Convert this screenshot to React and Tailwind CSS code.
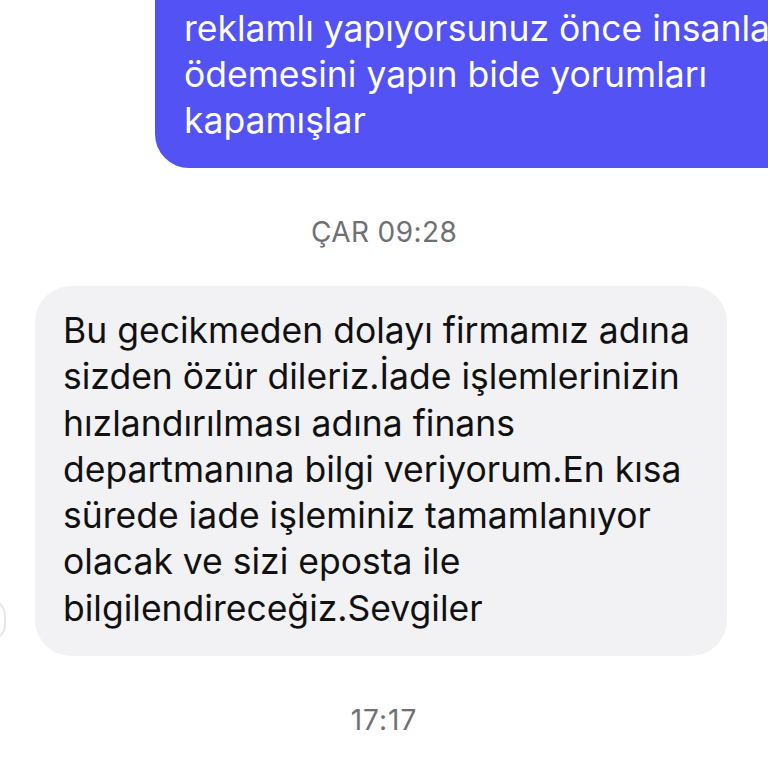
import React from "react";

export default function App() {
  const purple = [
    "reklamlı yapıyorsunuz önce insanların",
    "ödemesini yapın bide yorumları",
    "kapamışlar",
  ];
  const gray = [
    "Bu gecikmeden dolayı firmamız adına",
    "sizden özür dileriz.İade işlemlerinizin",
    "hızlandırılması adına finans",
    "departmanına bilgi veriyorum.En kısa",
    "sürede iade işleminiz tamamlanıyor",
    "olacak ve sizi eposta ile",
    "bilgilendireceğiz.Sevgiler",
  ];
  return (
    <div
      className="relative w-[768px] h-[768px] overflow-hidden bg-white"
      style={{ fontFamily: "Inter, 'Noto Sans', sans-serif" }}
    >
      <div className="flex flex-col">
        <div className="mt-[-60px] ml-[155px] w-[700px] rounded-[34px] bg-[#5252F5] pl-[29px] pt-[66px] pb-[24px] text-white text-[35.5px] leading-[46px] tracking-[0px]">
          {purple.map((l, i) => (
            <div key={i} className="whitespace-nowrap">{l}</div>
          ))}
        </div>
        <div className="mt-[48px] text-center text-[28px] leading-[32px] tracking-[0.4px] text-[#6f6f74]">
          ÇAR 09:28
        </div>
        <div className="mt-[38px] ml-[35px] w-[692px] rounded-[36px] bg-[#F2F2F5] pl-[28px] pt-[22px] pb-[24px] text-[#111111] text-[35.5px] leading-[46.3px] tracking-[0px]">
          {gray.map((l, i) => (
            <div key={i} className="whitespace-nowrap">{l}</div>
          ))}
        </div>
        <div className="mt-[48px] text-center text-[28px] leading-[32px] tracking-[1px] text-[#6f6f74]">
          17:17
        </div>
      </div>
      <div className="absolute left-[-30px] top-[598px] w-[36px] h-[44px] rounded-full border-2 border-[#e6e6ea]" />
    </div>
  );
}
